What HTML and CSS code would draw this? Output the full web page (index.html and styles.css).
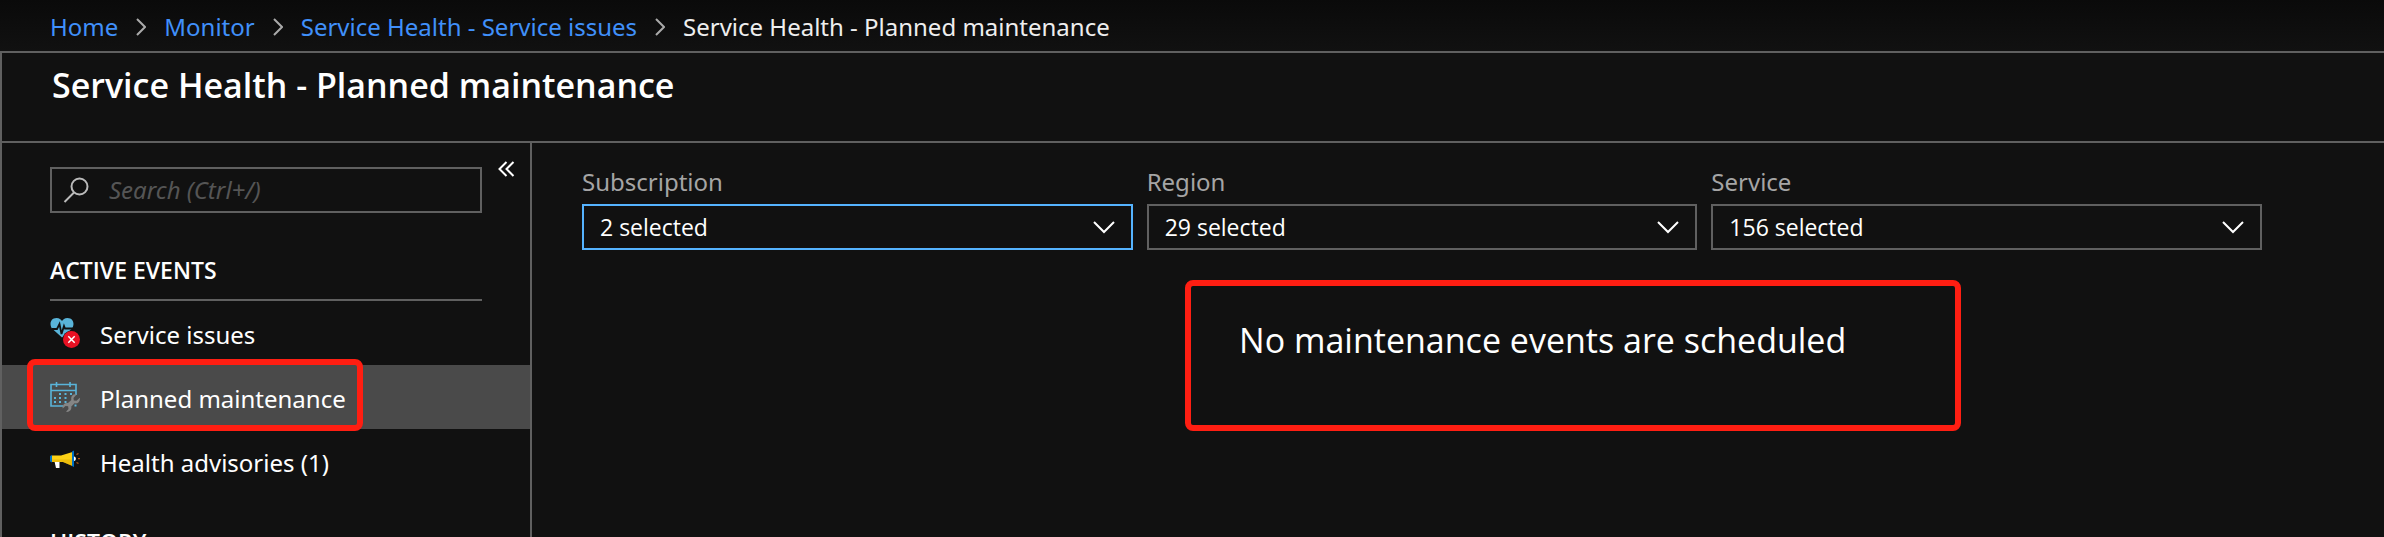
FILE: index.html
```
<!DOCTYPE html>
<html lang="en">
<head>
<meta charset="utf-8">
<title>Service Health - Planned maintenance</title>
<link rel="stylesheet" href="styles.css">
</head>
<body>
<nav class="breadcrumb" aria-label="Breadcrumb">
  <a href="#">Home</a>
  <svg class="crumb-sep" viewBox="0 0 10 18" aria-hidden="true"><path d="M1 1l8 8-8 8"/></svg>
  <a href="#">Monitor</a>
  <svg class="crumb-sep" viewBox="0 0 10 18" aria-hidden="true"><path d="M1 1l8 8-8 8"/></svg>
  <a href="#">Service Health - Service issues</a>
  <svg class="crumb-sep" viewBox="0 0 10 18" aria-hidden="true"><path d="M1 1l8 8-8 8"/></svg>
  <span>Service Health - Planned maintenance</span>
</nav>
<div class="blade">
  <header class="blade-header"><h1 class="blade-title">Service Health - Planned maintenance</h1></header>
  <div class="blade-body">
    <aside class="sidebar">
      <div class="search-row">
        <label class="search">
          <svg class="search-icon" viewBox="0 0 26 26" aria-hidden="true"><circle cx="16.5" cy="9.5" r="8"/><path d="M11 15.500L1.500 25"/></svg>
          <input class="search-input" type="text" placeholder="Search (Ctrl+/)" aria-label="Search">
        </label>
        <button class="collapse" type="button" aria-label="Collapse menu">
          <svg class="collapse-icon" viewBox="0 0 17 16" aria-hidden="true"><path d="M8.500 1l-7 7 7 7M15.500 1l-7 7 7 7"/></svg>
        </button>
      </div>
      <section class="group">
        <h2 class="group-title">ACTIVE EVENTS</h2>
        <ul class="menu">
          <li><a class="menu-item" href="#">
            <svg class="menu-icon" viewBox="0 0 30 30" aria-hidden="true">
              <path fill="#59b4d9" d="M12 19.500L2.500 11C-1 7.500 0 0 6.500 0 9.500 0 11 1.500 12 3c1-1.500 2.500-3 5.500-3C24 0 25 7.500 21.500 11z"/>
              <path fill="none" stroke="#111" stroke-width="1.800" d="M2 11h5l2.500-5 2 10 2.500-8 1 2.500h8"/>
              <circle cx="21.500" cy="21.500" r="9" fill="#111"/><circle cx="21.500" cy="21.500" r="8.500" fill="#e81123"/>
              <path stroke="#fff" stroke-width="1.500" d="M18.300 18.300l6.400 6.400M24.700 18.300l-6.400 6.400"/>
            </svg>
            <span class="menu-text">Service issues</span></a></li>
          <li><a class="menu-item menu-item-active" href="#" aria-current="page">
            <svg class="menu-icon" viewBox="0 0 30 30" aria-hidden="true">
              <path fill="none" stroke="#59b4d9" stroke-width="1.600" d="M13 24H1V2.500h25V13M1 8.500h25M6.500 0v5M20 0v5"/>
              <path fill="#59b4d9" d="M9 11h2v2H9zM14.500 11h2v2h-2zM20 11h2v2h-2zM4 15h2v2H4zM9 15h2v2H9zM14.500 15h2v2h-2zM4 19h2v2H4zM9 19h2v2H9zM14.500 19h2v2h-2zM24.500 22.500h2v2h-2z"/>
              <path fill="#858585" d="M26.500 12.500l-3 3.500.3 2.500 2.700.3 3.300-3c.7 3.400-1.800 6.200-5.300 5.500l-3.200 3.200c.7 3.400-1.900 6-5.300 5.300l2.500-2.900-.4-2.600-2.600-.3-2.800 2.500c-.7-3.400 1.900-6.200 5.300-5.400l3.300-3.200c-.8-3.600 2-6.200 5.200-5.400z"/>
            </svg>
            <span class="menu-text">Planned maintenance</span></a></li>
          <li><a class="menu-item" href="#">
            <svg class="menu-icon" viewBox="0 0 30 30" aria-hidden="true">
              <path fill="#fff" d="M4.500 15.500h5V22H6z"/>
              <path fill="#fcd116" d="M2 9.500h9L22.500 6v14L13 16H2z"/>
              <path fill="#dba900" d="M2 13.500h20.500V20L13 16H2z" opacity=".5"/>
              <path fill="#0072c6" d="M0 10l2-1v7.500l-2-1zM22 5.500l2-1v16.500l-2-1z"/>
              <path fill="#fff" d="M24 10.500c2.500 0 2.500 4.500 0 4.500z"/>
              <path stroke="#b85a12" stroke-width="1.300" d="M26.500 8.500l2-1M28 12.700h2M26.500 16.500l2 1"/>
            </svg>
            <span class="menu-text">Health advisories (1)</span></a></li>
        </ul>
      </section>
      <section class="group">
        <h2 class="group-title">HISTORY</h2>
      </section>
      <div class="callout callout-menu" aria-hidden="true"></div>
    </aside>
    <main class="content">
      <form class="filters">
        <div class="filter">
          <label class="filter-label" for="subscription">Subscription</label>
          <div class="select-wrap">
            <select class="select select-focused" id="subscription"><option>2 selected</option></select>
            <svg class="select-arrow" viewBox="0 0 22 13" aria-hidden="true"><path d="M1 1l10 10L21 1"/></svg>
          </div>
        </div>
        <div class="filter">
          <label class="filter-label" for="region">Region</label>
          <div class="select-wrap">
            <select class="select" id="region"><option>29 selected</option></select>
            <svg class="select-arrow" viewBox="0 0 22 13" aria-hidden="true"><path d="M1 1l10 10L21 1"/></svg>
          </div>
        </div>
        <div class="filter">
          <label class="filter-label" for="service">Service</label>
          <div class="select-wrap">
            <select class="select" id="service"><option>156 selected</option></select>
            <svg class="select-arrow" viewBox="0 0 22 13" aria-hidden="true"><path d="M1 1l10 10L21 1"/></svg>
          </div>
        </div>
      </form>
      <div class="callout empty"><p class="empty-text">No maintenance events are scheduled</p></div>
    </main>
  </div>
</div>
</body>
</html>
```
FILE: styles.css
```
* { box-sizing: border-box; }

html, body { height: 100%; }

body {
  margin: 0;
  display: flex;
  flex-direction: column;
  overflow: hidden;
  background: #111;
  color: #fff;
  font-family: "Noto Sans", "Open Sans", sans-serif;
  font-size: 24px;
  line-height: 32px;
}

a { color: #4090fa; text-decoration: none; }

svg { display: block; flex: none; fill: none; }

.breadcrumb {
  display: flex;
  flex: none;
  align-items: center;
  gap: 18px;
  padding: 11px 50px 8px;
  background: linear-gradient(#0a0a0a, #111);
  color: #eee;
  white-space: nowrap;
}

.crumb-sep { width: 10px; height: 18px; stroke: #aaa; stroke-width: 2; }

.blade {
  display: flex;
  flex: 1;
  flex-direction: column;
  min-height: 0;
  border-top: 2px solid #606060;
  border-left: 2px solid #606060;
}

.blade-header {
  flex: none;
  padding: 8px 50px 32px;
  border-bottom: 2px solid #606060;
}

.blade-title {
  margin: 0;
  font-family: "Open Sans", "Noto Sans", sans-serif;
  font-size: 34px;
  font-weight: 600;
  line-height: 48px;
}

.blade-body { display: flex; flex: 1; min-height: 0; }

.sidebar {
  position: relative;
  flex: none;
  width: 530px;
  overflow: hidden;
  border-right: 2px solid #606060;
}

.search-row {
  display: flex;
  align-items: flex-start;
  gap: 16px;
  padding: 24px 15px 8px 48px;
}

.search {
  display: flex;
  flex: 1;
  align-items: center;
  gap: 20px;
  height: 46px;
  padding: 0 11px;
  border: 2px solid #606060;
}

.search-icon { width: 26px; height: 26px; stroke: #bbb; stroke-width: 2; }

.search-input {
  flex: 1;
  min-width: 0;
  padding: 0;
  border: 0;
  outline: 0;
  background: none;
  color: #fff;
  font: inherit;
}

.search-input::placeholder { color: #555; font-style: italic; opacity: 1; }

.collapse {
  margin-top: -6px;
  padding: 0;
  border: 0;
  background: none;
}

.collapse-icon { width: 17px; height: 16px; stroke: #fff; stroke-width: 2; }

.group { padding-top: 33px; }

.group-title {
  margin: 0 48px;
  padding-bottom: 13px;
  border-bottom: 2px solid #606060;
  font-family: "Open Sans", "Noto Sans", sans-serif;
  font-size: 23px;
  font-weight: 600;
  line-height: 32px;
}

.menu { margin: 0; padding: 0; list-style: none; }

.menu-item {
  display: flex;
  align-items: center;
  gap: 20px;
  height: 64px;
  padding: 0 48px;
  color: #fff;
}

.menu-item-active { background: #4a4a4a; }

.menu-text { padding-top: 3px; }

.menu-icon { width: 30px; height: 30px; }

.callout { border: 6px solid #ff1e12; border-radius: 8px; }

.callout-menu {
  position: absolute;
  top: 216px;
  left: 25px;
  width: 336px;
  height: 72px;
}

.content { flex: 1; min-width: 0; padding: 23px 122px 0 50px; }

.filters {
  display: grid;
  grid-template-columns: repeat(3, minmax(0, 1fr));
  gap: 14px;
}

.filter-label { display: block; margin-bottom: 6px; color: #a5a5a5; }

.select-wrap { position: relative; }

.select {
  display: block;
  width: 100%;
  height: 46px;
  padding: 0 16px;
  border: 2px solid #606060;
  border-radius: 0;
  outline: 0;
  appearance: none;
  background: #111;
  color: #fff;
  font-family: "Open Sans", "Noto Sans", sans-serif;
  font-size: 23px;
}

.select-focused { border-color: #55b3ff; }

.select-arrow {
  position: absolute;
  top: 17px;
  right: 18px;
  width: 22px;
  height: 13px;
  stroke: #fff;
  stroke-width: 2;
  pointer-events: none;
}

.empty {
  width: 46.2%;
  min-height: 151px;
  margin: 30px 0 0 35.9%;
  padding: 30px 48px;
}

.empty-text {
  margin: 0;
  font-family: "Open Sans", "Noto Sans", sans-serif;
  font-size: 34px;
  line-height: 48px;
}
```
